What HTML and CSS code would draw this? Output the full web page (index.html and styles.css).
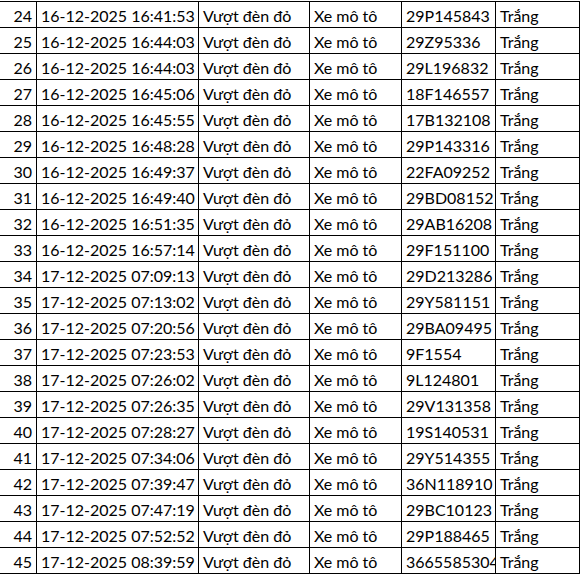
FILE: index.html
```html
<!DOCTYPE html>
<html lang="vi">
<head>
<meta charset="utf-8">
<link rel="stylesheet" href="styles.css">
</head>
<body>
<div class="sheet">
  <div class="row"><div class="c num">24</div><div class="c">16-12-2025 16:41:53</div><div class="c">Vượt đèn đỏ</div><div class="c">Xe mô tô</div><div class="c">29P145843</div><div class="c">Trắng</div></div>
  <div class="row"><div class="c num">25</div><div class="c">16-12-2025 16:44:03</div><div class="c">Vượt đèn đỏ</div><div class="c">Xe mô tô</div><div class="c">29Z95336</div><div class="c">Trắng</div></div>
  <div class="row"><div class="c num">26</div><div class="c">16-12-2025 16:44:03</div><div class="c">Vượt đèn đỏ</div><div class="c">Xe mô tô</div><div class="c">29L196832</div><div class="c">Trắng</div></div>
  <div class="row"><div class="c num">27</div><div class="c">16-12-2025 16:45:06</div><div class="c">Vượt đèn đỏ</div><div class="c">Xe mô tô</div><div class="c">18F146557</div><div class="c">Trắng</div></div>
  <div class="row"><div class="c num">28</div><div class="c">16-12-2025 16:45:55</div><div class="c">Vượt đèn đỏ</div><div class="c">Xe mô tô</div><div class="c">17B132108</div><div class="c">Trắng</div></div>
  <div class="row"><div class="c num">29</div><div class="c">16-12-2025 16:48:28</div><div class="c">Vượt đèn đỏ</div><div class="c">Xe mô tô</div><div class="c">29P143316</div><div class="c">Trắng</div></div>
  <div class="row"><div class="c num">30</div><div class="c">16-12-2025 16:49:37</div><div class="c">Vượt đèn đỏ</div><div class="c">Xe mô tô</div><div class="c">22FA09252</div><div class="c">Trắng</div></div>
  <div class="row"><div class="c num">31</div><div class="c">16-12-2025 16:49:40</div><div class="c">Vượt đèn đỏ</div><div class="c">Xe mô tô</div><div class="c">29BD08152</div><div class="c">Trắng</div></div>
  <div class="row"><div class="c num">32</div><div class="c">16-12-2025 16:51:35</div><div class="c">Vượt đèn đỏ</div><div class="c">Xe mô tô</div><div class="c">29AB16208</div><div class="c">Trắng</div></div>
  <div class="row"><div class="c num">33</div><div class="c">16-12-2025 16:57:14</div><div class="c">Vượt đèn đỏ</div><div class="c">Xe mô tô</div><div class="c">29F151100</div><div class="c">Trắng</div></div>
  <div class="row"><div class="c num">34</div><div class="c">17-12-2025 07:09:13</div><div class="c">Vượt đèn đỏ</div><div class="c">Xe mô tô</div><div class="c">29D213286</div><div class="c">Trắng</div></div>
  <div class="row"><div class="c num">35</div><div class="c">17-12-2025 07:13:02</div><div class="c">Vượt đèn đỏ</div><div class="c">Xe mô tô</div><div class="c">29Y581151</div><div class="c">Trắng</div></div>
  <div class="row"><div class="c num">36</div><div class="c">17-12-2025 07:20:56</div><div class="c">Vượt đèn đỏ</div><div class="c">Xe mô tô</div><div class="c">29BA09495</div><div class="c">Trắng</div></div>
  <div class="row"><div class="c num">37</div><div class="c">17-12-2025 07:23:53</div><div class="c">Vượt đèn đỏ</div><div class="c">Xe mô tô</div><div class="c">9F1554</div><div class="c">Trắng</div></div>
  <div class="row"><div class="c num">38</div><div class="c">17-12-2025 07:26:02</div><div class="c">Vượt đèn đỏ</div><div class="c">Xe mô tô</div><div class="c">9L124801</div><div class="c">Trắng</div></div>
  <div class="row"><div class="c num">39</div><div class="c">17-12-2025 07:26:35</div><div class="c">Vượt đèn đỏ</div><div class="c">Xe mô tô</div><div class="c">29V131358</div><div class="c">Trắng</div></div>
  <div class="row"><div class="c num">40</div><div class="c">17-12-2025 07:28:27</div><div class="c">Vượt đèn đỏ</div><div class="c">Xe mô tô</div><div class="c">19S140531</div><div class="c">Trắng</div></div>
  <div class="row"><div class="c num">41</div><div class="c">17-12-2025 07:34:06</div><div class="c">Vượt đèn đỏ</div><div class="c">Xe mô tô</div><div class="c">29Y514355</div><div class="c">Trắng</div></div>
  <div class="row"><div class="c num">42</div><div class="c">17-12-2025 07:39:47</div><div class="c">Vượt đèn đỏ</div><div class="c">Xe mô tô</div><div class="c">36N118910</div><div class="c">Trắng</div></div>
  <div class="row"><div class="c num">43</div><div class="c">17-12-2025 07:47:19</div><div class="c">Vượt đèn đỏ</div><div class="c">Xe mô tô</div><div class="c">29BC10123</div><div class="c">Trắng</div></div>
  <div class="row"><div class="c num">44</div><div class="c">17-12-2025 07:52:52</div><div class="c">Vượt đèn đỏ</div><div class="c">Xe mô tô</div><div class="c">29P188465</div><div class="c">Trắng</div></div>
  <div class="row"><div class="c num">45</div><div class="c">17-12-2025 08:39:59</div><div class="c">Vượt đèn đỏ</div><div class="c">Xe mô tô</div><div class="c">3665585304</div><div class="c">Trắng</div></div>
</div>
</body>
</html>
```
FILE: styles.css
```css
html, body {
  margin: 0;
  padding: 0;
  background: #fff;
}
body {
  font-family: Lato, "Noto Sans", sans-serif;
  font-size: 16px;
  color: #000;
}
.sheet {
  margin-top: 1px;
  border-top: 1px solid #000;
  width: 580px;
}
.row {
  display: grid;
  grid-template-columns: 37px 162px 111px 92px 94px 84px;
  height: 26px;
}
.c {
  box-sizing: border-box;
  border-right: 1px solid #000;
  border-bottom: 1px solid #000;
  display: flex;
  align-items: flex-end;
  padding: 0 0 2px 4px;
  line-height: 18px;
  white-space: nowrap;
  overflow: hidden;
}
.num {
  justify-content: flex-end;
  padding: 0 4px 2px 0;
}
```
